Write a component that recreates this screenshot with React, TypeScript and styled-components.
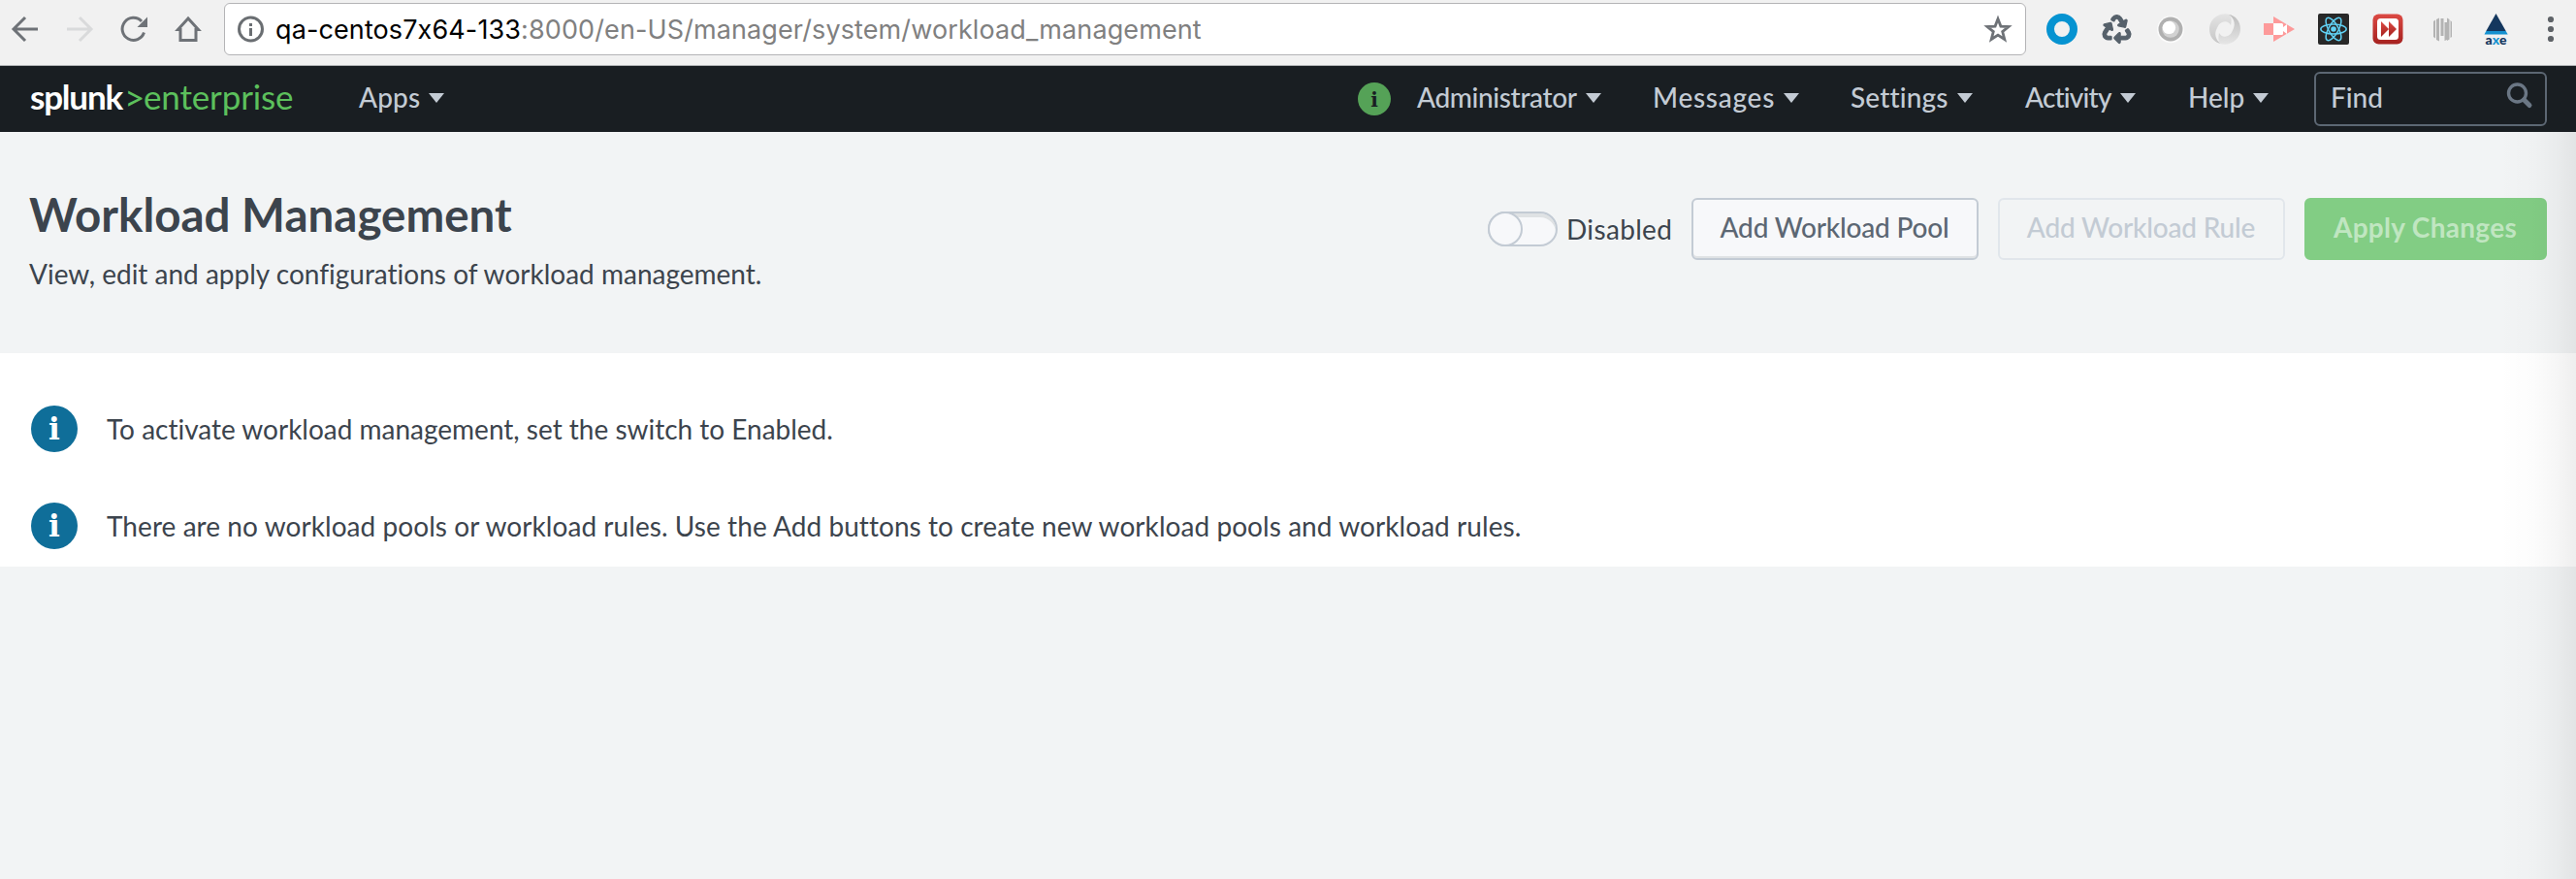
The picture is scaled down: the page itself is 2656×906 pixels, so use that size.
import React from 'react';
import styled, { createGlobalStyle } from 'styled-components';
import { FaRecycle } from 'react-icons/fa';

const GlobalStyle = createGlobalStyle`
  * { box-sizing: border-box; }
  body {
    margin: 0;
    background: #f2f4f5;
    font-family: Lato, "Liberation Sans", sans-serif;
    font-size: 28px;
    line-height: 40px;
    color: #3c444d;
    font-variant-ligatures: none;
  }
`;

const Page = styled.div`
  display: flex;
  flex-direction: column;
  min-height: 906px;
`;

/* Browser toolbar */

const BrowserBar = styled.header`
  display: flex;
  align-items: flex-start;
  gap: 9px;
  height: 68px;
  padding-top: 3px;
  background: #f1f1f1;
  border-bottom: 1px solid #b1b4b6;
`;

const NavIcons = styled.div`
  display: grid;
  grid-template-columns: 54px 56px 56px 56px;
  place-items: center;
  height: 54px;
`;

const AddressBar = styled.div`
  flex: 1;
  display: flex;
  align-items: center;
  height: 54px;
  padding: 0 12px 0 12px;
  background: #fff;
  border: 1px solid #b4b4b6;
  border-radius: 6px;
`;

const Url = styled.span`
  flex: 1;
  padding: 2px 0 0 8px;
  font-family: Inter, "Liberation Sans", sans-serif;
  font-size: 27px;
  letter-spacing: 0.11px;
  font-feature-settings: "calt" 0;
  color: #808080;
`;

const Host = styled.span`
  color: #000;
`;

const Extensions = styled.div`
  display: grid;
  grid-template-columns: repeat(9, 56px) 54px;
  place-items: center;
  height: 54px;
`;

const Glyph = styled.svg`
  display: block;
  width: 32px;
  height: 32px;
  overflow: visible;
`;

const RecycleIcon = styled(FaRecycle)`
  width: 29px;
  height: 30px;
  color: #56616b;
  stroke: #56616b;
  stroke-width: 22px;
  overflow: visible;
`;

/* Application bar */

const AppBar = styled.nav`
  display: flex;
  align-items: center;
  height: 68px;
  padding: 0 30px 0 31px;
  background: #191e22;
  color: #c3cbd4;
  font-weight: 500;
`;

const Logo = styled.div`
  display: grid;
  grid-template-columns: 97px 20px 222px;
  padding-bottom: 5px;
  font-size: 35px;
  font-weight: 400;
  color: #5cc05c;
`;

const LogoName = styled.span`
  font-weight: 700;
  letter-spacing: -1.2px;
  color: #fff;
`;

const LogoEdition = styled.span`
  letter-spacing: -0.15px;
`;

const LogoAngle = styled.span`
  padding-top: 1px;
  font-size: 37px;
`;

const MenuGrid = styled.div`
  display: grid;
  grid-template-columns: 61px 243px 204px 180px 168px 130px 240px;
  align-items: center;
  margin-left: auto;
`;

const Menu = styled.div<{ $tracking?: number }>`
  display: flex;
  align-items: center;
  gap: 9px;
  padding-bottom: 4px;
  letter-spacing: ${(p) => p.$tracking ?? 0}px;
`;

const Caret = styled.i`
  margin-top: 1px;
  border: 8px solid transparent;
  border-top: 10px solid #c3cbd4;
  border-bottom: 0;
`;

const Badge = styled.span<{ $size: number; $font: number; $bg: string; $ink: string }>`
  display: flex;
  align-items: center;
  justify-content: center;
  flex: none;
  width: ${(p) => p.$size}px;
  height: ${(p) => p.$size}px;
  padding-top: 1px;
  border-radius: 50%;
  background: ${(p) => p.$bg};
  color: ${(p) => p.$ink};
  font: 700 ${(p) => p.$font}px/1.2 "DejaVu Serif", serif;
`;

const FindBox = styled.div`
  display: flex;
  align-items: flex-start;
  justify-content: space-between;
  height: 56px;
  padding: 4px 11px 0 15px;
  border: 2px solid #5c6773;
  border-radius: 6px;
`;

/* Page header */

const PageHeader = styled.section`
  display: flex;
  justify-content: space-between;
  height: 228px;
  padding: 56px 30px 0;
`;

const Title = styled.h1`
  margin: 0 0 12px;
  font-size: 47.5px;
  line-height: 58px;
  font-weight: 700;
`;

const Intro = styled.p`
  margin: 0;
`;

const Actions = styled.div`
  display: flex;
  align-items: center;
  height: 64px;
  margin-top: 12px;
`;

const Switch = styled.span`
  width: 72px;
  height: 36px;
  border: 2px solid #c3cbd4;
  border-radius: 18px;
  background: #f7f8fa;
  box-shadow: inset 0 4px 0 #dfe2e4;
`;

const Knob = styled.span`
  display: block;
  width: 36px;
  height: 36px;
  margin: -2px;
  border: 2px solid #c3cbd4;
  border-radius: 50%;
  background: #f7f8fa;
`;

const SwitchLabel = styled.span`
  width: 128px;
  margin-left: 9px;
  letter-spacing: 0.34px;
`;

const Button = styled.button<{ $variant?: 'off' | 'primary' }>`
  width: ${(p) => (p.$variant === 'primary' ? 250 : 296)}px;
  height: 64px;
  margin-left: ${(p) => (p.$variant ? 20 : 1)}px;
  padding: 0 1px 4px 0;
  border: 2px solid
    ${(p) => (p.$variant === 'primary' ? '#82cd84' : p.$variant === 'off' ? '#e1e6eb' : '#c3cbd4')};
  border-radius: 6px;
  background: ${(p) => (p.$variant === 'primary' ? '#82cd84' : p.$variant === 'off' ? 'transparent' : '#f7f8fa')};
  box-shadow: ${(p) => (p.$variant ? 'none' : 'inset 0 -2px 0 #dfe2e4')};
  color: ${(p) => (p.$variant === 'primary' ? '#c0e6c1' : p.$variant === 'off' ? '#c3cbd4' : '#5c6773')};
  font: ${(p) => (p.$variant === 'primary' ? 700 : 500)} 28px/40px Lato, sans-serif;
  letter-spacing: ${(p) => (p.$variant === 'primary' ? 0.3 : -0.2)}px;
`;

/* Messages */

const Messages = styled.section`
  display: flex;
  flex-direction: column;
  gap: 52px;
  height: 220px;
  padding: 54px 32px 0;
  background: #fff;
`;

const Message = styled.div`
  display: flex;
  align-items: center;
  gap: 30px;
  height: 48px;
`;

const MessageText = styled.span<{ $tracking: number }>`
  letter-spacing: ${(p) => p.$tracking}px;
`;

const Content = styled.main`
  position: relative;
  flex: 1;
`;

const EdgeShade = styled.div`
  position: absolute;
  top: 0;
  right: 0;
  bottom: 0;
  width: 80px;
  pointer-events: none;
  background: linear-gradient(to right, rgba(0, 0, 0, 0), rgba(0, 0, 0, 0.013) 45%, rgba(0, 0, 0, 0.035) 75%, rgba(0, 0, 0, 0.068));
`;

const grey = '#6e7277';

const BackIcon = ({ color = grey, flip = false }) => (
  <Glyph viewBox="0 0 32 32" fill="none" stroke={color} strokeWidth="3">
    <path d={flip ? 'M3 16h24M16 4l12 12-12 12' : 'M28 16H4M15 4L3 16l12 12'} />
  </Glyph>
);

const ReloadIcon = () => (
  <Glyph viewBox="0 0 32 32">
    <path d="M26.5 19.5A11.5 11.5 0 1 1 24 8" fill="none" stroke={grey} strokeWidth="3" />
    <path d="M30 3.5V14H19.5z" fill={grey} />
  </Glyph>
);

const HomeIcon = () => (
  <Glyph viewBox="0 0 32 32" fill="none" stroke={grey} strokeWidth="3">
    <path d="M16 5L5.5 16.5H8V27.5H24V16.5h2.5z" />
  </Glyph>
);

const SiteInfoIcon = () => (
  <Glyph viewBox="0 0 32 32">
    <circle cx="14.5" cy="16" r="12" fill="none" stroke="#6a6e72" strokeWidth="3" />
    <path d="M13 10h3v3h-3zM13 15h3v8h-3z" fill="#6a6e72" />
  </Glyph>
);

const StarIcon = () => (
  <Glyph viewBox="0 0 32 32" fill="none" stroke={grey} strokeWidth="2.8">
    <path d="M16 5.5l2.9 7.6 8.1.4-6.3 5.1 2.1 7.9-6.8-4.4-6.8 4.4 2.1-7.9L5 13.5l8.1-.4z" />
  </Glyph>
);

const RingIcon = () => (
  <Glyph viewBox="0 0 32 32">
    <circle cx="16" cy="16" r="12" fill="none" stroke="#0693d1" strokeWidth="8" />
  </Glyph>
);

const OrbIcon = () => (
  <Glyph viewBox="0 0 32 32">
    <circle cx="16" cy="16.3" r="14" fill="#fbfbfb" />
    <circle cx="16" cy="16" r="12.5" fill="#b0b0b0" />
    <circle cx="16" cy="16" r="8.8" fill="#d2d2d2" />
    <circle cx="14.4" cy="14.4" r="6.7" fill="#fff" />
  </Glyph>
);

const SwirlIcon = () => (
  <Glyph viewBox="0 0 32 32">
    <defs>
      <linearGradient id="swirlA" x1="0" y1="0" x2="0" y2="1">
        <stop offset="0" stopColor="#e4e4e4" />
        <stop offset="1" stopColor="#c6c6c6" />
      </linearGradient>
      <linearGradient id="swirlB" x1="0" y1="0" x2="0" y2="1">
        <stop offset="0" stopColor="#bdbdbd" />
        <stop offset="1" stopColor="#e6e6e6" />
      </linearGradient>
    </defs>
    <path d="M21 1C11-2 0 5 0 16c0 8 5 14 12 15-5-3-7-9-5-14 2-4 2-6 6-8 4-1.5 7-.5 9 3 1-5 1-8-1-11z" fill="url(#swirlA)" />
    <path d="M11 31c10 3 21-4 21-15 0-8-5-14-12-15 5 3 7 9 5 14-2 4-2 6-6 8-4 1.5-7 .5-9-3-1 5-1 8 1 11z" fill="url(#swirlB)" />
  </Glyph>
);

const RecorderIcon = () => (
  <Glyph viewBox="0 0 32 32">
    <path d="M0 10h10V3l22 13-22 13v-7H0z" fill="#fd9a9a" />
    <path d="M10 10h8.5q1.5 0 1.5 1.5v2.500l4-3v10l-4-3v2.500q0 1.5-1.5 1.5H10z" fill="#fff" />
  </Glyph>
);

const ReactIcon = () => (
  <Glyph viewBox="0 0 32 32">
    <rect width="32" height="32" rx="2" fill="#282828" />
    <circle cx="16" cy="16" r="2.8" fill="#61d2f5" />
    <g fill="none" stroke="#61d2f5" strokeWidth="1.5">
      <ellipse cx="16" cy="16" rx="13.2" ry="5" />
      <ellipse cx="16" cy="16" rx="13.2" ry="5" transform="rotate(60 16 16)" />
      <ellipse cx="16" cy="16" rx="13.2" ry="5" transform="rotate(120 16 16)" />
    </g>
  </Glyph>
);

const FastForwardIcon = () => (
  <Glyph viewBox="0 0 32 32">
    <defs>
      <linearGradient id="ffRed" x1="0" y1="0" x2="0" y2="1">
        <stop offset="0" stopColor="#dc4a44" />
        <stop offset="1" stopColor="#a5211f" />
      </linearGradient>
    </defs>
    <rect x=".5" y=".5" width="31" height="31" rx="6" fill="url(#ffRed)" />
    <rect x="5" y="5" width="22" height="22" rx="3.5" fill="#fff" />
    <path d="M9 8l8 8-8 8zM17 8l8 8-8 8z" fill="url(#ffRed)" />
  </Glyph>
);

const BarsIcon = () => (
  <Glyph viewBox="0 0 32 32" fill="#b3b3b3">
    <path d="M7 8l2-1.5v19L7 24zM10 6l3-1.5v24L10 27zM14.5 5h3v18h-3zM18.5 9h2.5v18l-2.5 1zM21 4.5L23.5 6v20.5L21 28zM24.5 7L26 8.5v15.5l-1.5 1z" />
  </Glyph>
);

const AxeText = styled.text`
  font: 900 14px Lato, sans-serif;
`;

const AxeIcon = () => (
  <Glyph viewBox="0 0 32 32">
    <path d="M15.5 0L25.7 18H5.3z" fill="#14375e" />
    <path d="M5.300 18h20.4l2 3.5H3.500z" fill="#1591d0" />
    <AxeText x="4.5" y="31.8" textLength="22" fill="#14375e">
      a<tspan fill="#1591d0">x</tspan>e
    </AxeText>
  </Glyph>
);

const DotsIcon = () => (
  <Glyph viewBox="0 0 32 32" fill="#5f6368">
    <circle cx="17" cy="6" r="3.1" />
    <circle cx="17" cy="16" r="3.1" />
    <circle cx="17" cy="26" r="3.1" />
  </Glyph>
);

const SearchIcon = () => (
  <Glyph viewBox="0 0 32 32" fill="none" stroke="#6b7785">
    <circle cx="14.5" cy="16" r="9" strokeWidth="3.4" />
    <path d="M21.5 23l5.500 5.500" strokeWidth="5" strokeLinecap="round" />
  </Glyph>
);

export default function App() {
  return (
    <Page>
      <GlobalStyle />
      <BrowserBar>
        <NavIcons>
          <BackIcon />
          <BackIcon color="#d9dadb" flip />
          <ReloadIcon />
          <HomeIcon />
        </NavIcons>
        <AddressBar>
          <SiteInfoIcon />
          <Url>
            <Host>qa-centos7x64-133</Host>:8000/en-US/manager/system/workload_management
          </Url>
          <StarIcon />
        </AddressBar>
        <Extensions>
          <RingIcon />
          <RecycleIcon />
          <OrbIcon />
          <SwirlIcon />
          <RecorderIcon />
          <ReactIcon />
          <FastForwardIcon />
          <BarsIcon />
          <AxeIcon />
          <DotsIcon />
        </Extensions>
      </BrowserBar>

      <AppBar>
        <Logo>
          <LogoName>splunk</LogoName>
          <LogoAngle>&gt;</LogoAngle>
          <LogoEdition>enterprise</LogoEdition>
        </Logo>
        <Menu $tracking={0.13}>Apps<Caret /></Menu>
        <MenuGrid>
          <Badge $size={34} $font={20} $bg="#55a257" $ink="#191e22">i</Badge>
          <Menu $tracking={-0.36}>Administrator<Caret /></Menu>
          <Menu $tracking={0.73}>Messages<Caret /></Menu>
          <Menu $tracking={0.14}>Settings<Caret /></Menu>
          <Menu $tracking={-0.8}>Activity<Caret /></Menu>
          <Menu>Help<Caret /></Menu>
          <FindBox>
            Find
            <SearchIcon />
          </FindBox>
        </MenuGrid>
      </AppBar>

      <Content>
        <PageHeader>
          <div>
            <Title>Workload Management</Title>
            <Intro>View, edit and apply configurations of workload management.</Intro>
          </div>
          <Actions>
            <Switch><Knob /></Switch>
            <SwitchLabel>Disabled</SwitchLabel>
            <Button>Add Workload Pool</Button>
            <Button $variant="off">Add Workload Rule</Button>
            <Button $variant="primary">Apply Changes</Button>
          </Actions>
        </PageHeader>
        <Messages>
          <Message>
            <Badge $size={48} $font={31} $bg="#0f6e99" $ink="#fff">i</Badge>
            <MessageText $tracking={-0.01}>To activate workload management, set the switch to Enabled.</MessageText>
          </Message>
          <Message>
            <Badge $size={48} $font={31} $bg="#0f6e99" $ink="#fff">i</Badge>
            <MessageText $tracking={0.06}>
              There are no workload pools or workload rules. Use the Add buttons to create new workload pools and workload rules.
            </MessageText>
          </Message>
        </Messages>
        <EdgeShade />
      </Content>
    </Page>
  );
}
